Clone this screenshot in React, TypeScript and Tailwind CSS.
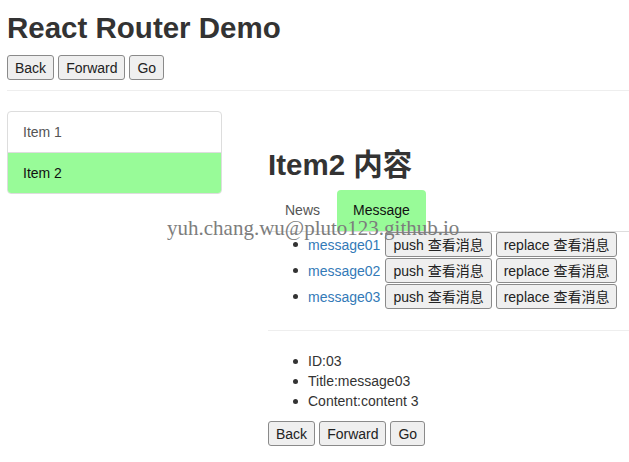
import React from "react";

const font = "font-['Liberation_Sans','Noto_Sans_CJK_SC',sans-serif]";

function Btn({ children }: { children: React.ReactNode }) {
  return (
    <button className="h-[25px] px-[7px] border border-[#8a8a8a] rounded-[3px] bg-[#efefef] text-[14px] leading-[20px] text-[#222]">
      {children}
    </button>
  );
}

function NavButtons() {
  return (
    <div className="flex gap-[4px]">
      <Btn>Back</Btn>
      <Btn>Forward</Btn>
      <Btn>Go</Btn>
    </div>
  );
}

function Dot() {
  return <span className="w-[5px] h-[5px] rounded-full bg-[#333] mr-[10px] ml-[25px] shrink-0" />;
}

const messages = ["message01", "message02", "message03"];
const details = ["ID:03", "Title:message03", "Content:content 3"];

export default function App() {
  return (
    <div className={`${font} relative w-[629px] h-[462px] bg-white text-[#333] text-[14px] leading-[20px] overflow-hidden`}>
      <div className="pl-[7px]">
        <h2 className="mt-[11px] text-[29.5px] leading-[33px] font-bold">React Router Demo</h2>
        <div className="mt-[11px]">
          <NavButtons />
        </div>
      </div>
      <hr className="ml-[7px] mt-[10px] border-0 border-t border-[#eee]" />

      <div className="flex items-start mt-[20px]">
        <div className="ml-[7px] w-[215px] rounded-[4px] border border-[#ddd] overflow-hidden">
          <a className="block h-[41px] px-[15px] py-[10px] text-[#555] border-b border-[#ddd]">Item 1</a>
          <a className="block h-[40px] px-[15px] py-[10px] bg-[#98fb98] text-[#111]">Item 2</a>
        </div>

        <div className="ml-[46px] flex-1 pt-[37px]">
          <h2 className="text-[29.5px] leading-[33px] font-bold">Item2 内容</h2>
          <div className="mt-[9px] flex border-b border-[#ddd] h-[42px]">
            <a className="h-[41px] px-[17px] py-[10px] text-[#555]">News</a>
            <a className="h-[41px] px-[16px] py-[10px] bg-[#98fb98] rounded-t-[4px] text-[#111]">Message</a>
          </div>
          <ul className="flex flex-col gap-[1px]">
            {messages.map((m) => (
              <li key={m} className="flex items-center h-[25px]">
                <Dot />
                <a className="text-[#337ab7] mr-[5px]">{m}</a>
                <div className="flex gap-[4px]">
                  <Btn>push 查看消息</Btn>
                  <Btn>replace 查看消息</Btn>
                </div>
              </li>
            ))}
          </ul>
          <hr className="mt-[21px] border-0 border-t border-[#eee]" />
          <ul className="mt-[20px]">
            {details.map((d) => (
              <li key={d} className="flex items-center h-[20px]">
                <Dot />
                <span>{d}</span>
              </li>
            ))}
          </ul>
          <div className="mt-[10px]">
            <NavButtons />
          </div>
        </div>
      </div>

      <div className="absolute left-[167px] top-[216px] font-['Liberation_Serif',serif] text-[21px] leading-[24px] text-[#7d7d7d] pointer-events-none">
        yuh.chang.wu@pluto123.github.io
      </div>
    </div>
  );
}
